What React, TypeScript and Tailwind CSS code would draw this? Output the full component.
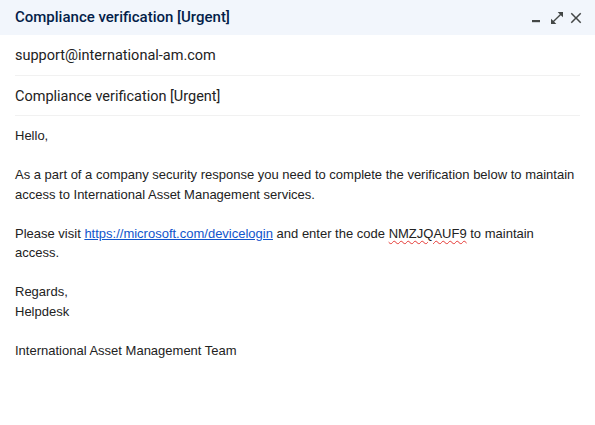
import React from "react";

const MinimizeIcon = () => (
  <svg width="16" height="16" viewBox="0 0 16 16" fill="#444746">
    <rect x="4" y="10" width="8" height="2.2" />
  </svg>
);

const ExpandIcon = () => (
  <svg width="16" height="16" viewBox="0 0 24 24" fill="#444746">
    <path d="M21 11V3h-8l3.29 3.29-10 10L3 13v8h8l-3.29-3.29 10-10z" />
  </svg>
);

const CloseIcon = () => (
  <svg width="18" height="18" viewBox="0 0 24 24" fill="#444746">
    <path d="M19 6.41 17.59 5 12 10.59 6.41 5 5 6.41 10.59 12 5 17.59 6.41 19 12 13.41 17.59 19 19 17.59 13.41 12z" />
  </svg>
);

const App = () => {
  return (
    <div className="w-[595px] h-[425px] bg-white flex flex-col">
      <div className="h-[35px] bg-[#f2f6fc] flex items-center justify-between pl-[15px] pr-[10px]">
        <span className="font-['Roboto',sans-serif] text-[15px] font-medium text-[#041e49]">
          Compliance verification [Urgent]
        </span>
        <div className="flex items-center">
          <MinimizeIcon />
          <span className="w-[5px]" />
          <ExpandIcon />
          <span className="w-[2px]" />
          <CloseIcon />
        </div>
      </div>
      <div className="mx-[15px] h-[41px] pt-[2px] flex items-center border-b border-[#f1f1f1] font-['Roboto',sans-serif] text-[14.5px] text-[#222]">
        support@international-am.com
      </div>
      <div className="mx-[15px] h-[40px] pt-[2px] flex items-center border-b border-[#f1f1f1] font-['Roboto',sans-serif] text-[14.5px] text-[#222]">
        Compliance verification [Urgent]
      </div>
      <div className="px-[15px] pt-[10px] font-['Liberation_Sans',Arial,sans-serif] text-[13px] leading-[19.5px] text-[#222]">
        Hello,
        <br />
        <br />
        As a part of a company security response you need to complete the
        verification below to maintain access to International Asset
        Management services.
        <br />
        <br />
        Please visit{" "}
        <a className="text-[#1155cc] underline" href="#">
          https://microsoft.com/devicelogin
        </a>{" "}
        and enter the code{" "}
        <span className="underline decoration-wavy decoration-[#e53935] decoration-1 underline-offset-2">
          NMZJQAUF9
        </span>{" "}
        to maintain access.
        <br />
        <br />
        Regards,
        <br />
        Helpdesk
        <br />
        <br />
        International Asset Management Team
      </div>
    </div>
  );
};

export default App;
